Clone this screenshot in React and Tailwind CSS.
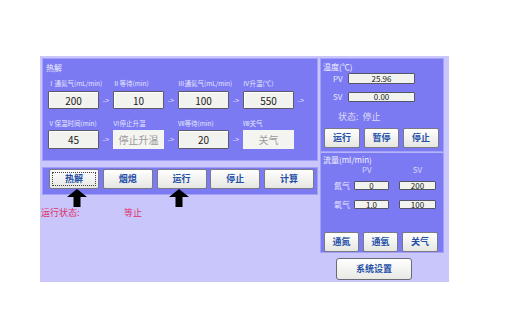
import React from 'react';

const FONT = { fontFamily: '"Noto Sans CJK SC", "DejaVu Sans", sans-serif' };

const Field = ({ value, flat }) =>
  flat ? (
    <div className="w-[51px] h-full flex items-center justify-center bg-[#f4f4f0] text-[#9a9a9a] text-[10px]">
      {value}
    </div>
  ) : (
    <div className="w-[51px] h-full flex items-center justify-center bg-[#f2f2ee] border border-[#5a5a6a] rounded-[1px] text-[#222] text-[10px] shadow-[inset_1px_1px_0_#fff]">
      {value}
    </div>
  );

const Arrow = () => (
  <span className="w-[14px] text-center text-[7px] text-[#e4e4ff] leading-none">-&gt;</span>
);

const Btn = ({ label, className = '', focus }) => (
  <button
    className={`flex items-center justify-center bg-gradient-to-b from-[#ffffff] to-[#e6e6e2] border border-[#7a7a86] rounded-[2px] text-[#2450a8] font-bold text-[9px] ${className}`}
  >
    <span
      className={
        focus
          ? 'flex items-center justify-center w-[calc(100%-4px)] h-[calc(100%-4px)] border border-dotted border-[#444]'
          : ''
      }
    >
      {label}
    </span>
  </button>
);

const UpArrow = ({ left }) => (
  <svg
    className="absolute top-[21px]"
    style={{ left }}
    width="20"
    height="18"
    viewBox="0 0 20 18"
  >
    <polygon points="10,0 20,8 13.5,8 13.5,18 6.5,18 6.5,8 0,8" fill="#000" />
  </svg>
);

const Box = ({ value, w }) => (
  <div
    className={`${w} h-full flex items-center justify-center bg-[#f2f2ee] border border-[#55556a] rounded-[1px] text-[#222] text-[8px] leading-none`}
  >
    {value}
  </div>
);

export default function App() {
  const row1 = [
    ['Ⅰ通氮气(mL/min)', '200'],
    ['Ⅱ等待(min)', '10'],
    ['Ⅲ通氮气(mL/min)', '100'],
    ['Ⅳ升温(℃)', '550'],
  ];
  const row2 = [
    ['Ⅴ保温时间(min)', '45', false],
    ['Ⅵ停止升温', '停止升温', true],
    ['Ⅶ等待(min)', '20', false],
    ['Ⅷ关气', '关气', true],
  ];

  return (
    <div className="w-[511px] h-[332px] bg-white pt-[56px] pl-[40px]" style={FONT}>
      <div className="w-[409px] h-[226px] bg-[#c8c6fb] flex gap-[2px] pl-[2px] pt-[2px]">
        {/* left column */}
        <div className="w-[276px] flex flex-col relative">
          <div className="h-[103px] bg-[#7c7af2] border border-[#a3a0f7] px-[5px] pt-[4px]">
            <div className="text-[8px] leading-[10px] text-[#eeeeff] -ml-[2px]">热解</div>
            <div className="flex mt-[6px] h-[9px] items-center">
              {row1.map(([l]) => (
                <div key={l} className="w-[65px] text-[6.5px] text-[#e6e6ff] leading-none whitespace-nowrap">
                  {l}
                </div>
              ))}
            </div>
            <div className="flex items-center h-[18px] mt-[3px]">
              {row1.map(([l, v]) => (
                <React.Fragment key={l}>
                  <Field value={v} />
                  <Arrow />
                </React.Fragment>
              ))}
            </div>
            <div className="flex mt-[10px] h-[9px] items-center">
              {row2.map(([l]) => (
                <div key={l} className="w-[65px] text-[6.5px] text-[#e6e6ff] leading-none whitespace-nowrap">
                  {l}
                </div>
              ))}
            </div>
            <div className="flex items-center h-[19px] mt-[2px]">
              {row2.map(([l, v, flat], i) => (
                <React.Fragment key={l}>
                  <Field value={v} flat={flat} />
                  {i < 3 && <Arrow />}
                </React.Fragment>
              ))}
            </div>
          </div>

          <div className="relative mt-[6px] h-[28px] bg-[#7c7af2] border border-[#a3a0f7] flex items-start pt-[1px] pl-[6px] gap-[3.75px]">
            <Btn label="热解" className="w-[50px] h-[20px]" focus />
            <Btn label="烟熄" className="w-[50px] h-[20px]" />
            <Btn label="运行" className="w-[50px] h-[20px]" />
            <Btn label="停止" className="w-[50px] h-[20px]" />
            <Btn label="计算" className="w-[50px] h-[20px]" />
            <UpArrow left="24px" />
            <UpArrow left="126px" />
          </div>

          <div className="flex mt-[13px] text-[9px] leading-none text-[#e0306a]">
            <span className="w-[83px] -ml-[1px]">运行状态:</span>
            <span>等止</span>
          </div>
        </div>

        {/* right column */}
        <div className="w-[124px] flex flex-col">
          <div className="h-[94px] bg-[#7c7af2] border border-[#a3a0f7] pl-[2px] pt-[3px] flex flex-col">
            <div className="text-[8px] leading-[10px] text-[#f2f2ff]">温度(℃)</div>
            <div className="flex items-center h-[11px] mt-[1px]">
              <span className="w-[25px] pl-[10px] text-[8px] text-[#e8e8ff] leading-none">PV</span>
              <Box value="25.96" w="w-[67px]" />
            </div>
            <div className="flex items-center h-[10px] mt-[8px]">
              <span className="w-[25px] pl-[10px] text-[8px] text-[#e8e8ff] leading-none">SV</span>
              <Box value="0.00" w="w-[67px]" />
            </div>
            <div className="mt-[10px] pl-[15px] text-[9px] leading-none text-[#dcdcf6]">状态:&nbsp;&nbsp;停止</div>
            <div className="flex gap-[4px] mt-[7px] pl-[1px]">
              <Btn label="运行" className="w-[36px] h-[20px]" />
              <Btn label="暂停" className="w-[35px] h-[20px]" />
              <Btn label="停止" className="w-[36px] h-[20px]" />
            </div>
          </div>

          <div className="h-[101px] bg-[#7c7af2] border border-[#a3a0f7] border-t-[#b6b4fa] pl-[2px] pt-[2px] flex flex-col">
            <div className="text-[8px] leading-[10px] text-[#f2f2ff]">流量(ml/min)</div>
            <div className="flex text-[8px] leading-none text-[#d8d8fa] mt-[1px]">
              <span className="ml-[39px]">PV</span>
              <span className="ml-[41px]">SV</span>
            </div>
            <div className="flex items-center h-[9px] mt-[7px]">
              <span className="w-[31px] pl-[11px] text-[8px] text-[#e6e6ff] leading-none">氮气</span>
              <Box value="0" w="w-[35px]" />
              <span className="w-[10px]" />
              <Box value="200" w="w-[37px]" />
            </div>
            <div className="flex items-center h-[9px] mt-[10px]">
              <span className="w-[31px] pl-[11px] text-[8px] text-[#e6e6ff] leading-none">氧气</span>
              <Box value="1.0" w="w-[35px]" />
              <span className="w-[10px]" />
              <Box value="100" w="w-[37px]" />
            </div>
            <div className="flex gap-[4px] mt-[23px] pl-[1px]">
              <Btn label="通氮" className="w-[35px] h-[20px]" />
              <Btn label="通氧" className="w-[35px] h-[20px]" />
              <Btn label="关气" className="w-[36px] h-[20px]" />
            </div>
          </div>

          <div className="flex pl-[16px] mt-[5px]">
            <button className="w-[76px] h-[22px] flex items-center justify-center bg-gradient-to-b from-[#ffffff] to-[#e8e8e4] border border-[#6a6a74] rounded-[3px] text-[#2450a8] font-bold text-[9px]">
              系统设置
            </button>
          </div>
        </div>
      </div>
    </div>
  );
}
